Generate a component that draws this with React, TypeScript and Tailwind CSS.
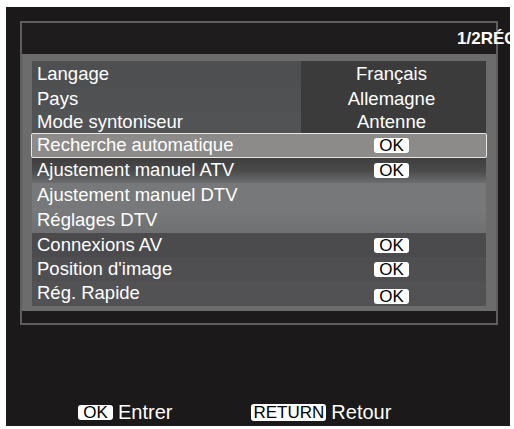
import React from 'react';

const font = { fontFamily: '"Liberation Sans", Arial, sans-serif' };

const Ok: React.FC<{ className?: string }> = ({ className = '' }) => (
  <span
    className={`inline-flex h-[15px] w-[35px] items-center justify-center rounded-[3px] bg-white text-[17px] leading-none text-black ${className}`}
  >
    OK
  </span>
);

type Row = {
  label: string;
  value?: string;
  ok?: boolean;
  h: string;
  bg: string;
  valueBg?: string;
  selected?: boolean;
  okClass?: string;
};

const rows: Row[] = [
  { label: 'Langage', value: 'Français', h: 'h-[26px]', bg: 'bg-[#4e4f51]', valueBg: 'bg-[#3b3b3c]' },
  { label: 'Pays', value: 'Allemagne', h: 'h-[24px]', bg: 'bg-[#505153]', valueBg: 'bg-[#3b3b3c]' },
  { label: 'Mode syntoniseur', value: 'Antenne', h: 'h-[22px]', bg: 'bg-[#525355]', valueBg: 'bg-[#3b3b3c]' },
  { label: 'Recherche automatique', ok: true, h: 'h-[25px]', bg: 'bg-[#8d8b89]', selected: true },
  { label: 'Ajustement manuel ATV', ok: true, h: 'h-[25px]', bg: 'bg-gradient-to-b from-[#3e3e3f] via-[#4a4a4b] to-[#6c6d6e]' },
  { label: 'Ajustement manuel DTV', h: 'h-[25px]', bg: 'bg-[#777879]' },
  { label: 'Réglages DTV', h: 'h-[25px]', bg: 'bg-gradient-to-b from-[#797a7b] to-[#6f7071]' },
  { label: 'Connexions AV', ok: true, h: 'h-[24px]', bg: 'bg-[#4b4b4d]' },
  { label: "Position d'image", ok: true, h: 'h-[24px]', bg: 'bg-[#4f4f51]' },
  { label: 'Rég. Rapide', ok: true, h: 'h-[25px]', bg: 'bg-[#525254]', okClass: 'mt-[6px]' },
];

export default function App() {
  return (
    <div className="h-[429px] w-[514px] bg-white pl-[6px] pt-[7px]" style={font}>
      <div className="flex h-[419px] w-[504px] flex-col overflow-hidden bg-[#1b1919] pl-[14px] pt-[14px]">
        <div className="w-[478px] border-2 border-[#5e5e5e] bg-[#6c6c6c]">
          <div className="flex h-[31px] items-center whitespace-nowrap bg-[#1e1c1c] pl-[435px] text-[17px] font-bold text-white">
            1/2RÉGLAGES
          </div>
          <div className="px-[10px] pb-[5px] pt-[7px]">
            {rows.map((r) => (
              <div
                key={r.label}
                className={`flex ${r.h} ${r.bg} ${r.selected ? '-mx-[1px] rounded-[2px] border-[1.5px] border-[#e8e6e4]' : ''}`}
              >
                <div className="flex flex-1 items-center pl-[5px] text-[18.5px] leading-none text-white">
                  {r.label}
                </div>
                <div
                  className={`flex w-[185px] items-center justify-center pr-[4px] text-[18.5px] leading-none text-white ${r.valueBg ?? ''}`}
                >
                  {r.value}
                  {r.ok && <Ok className={r.okClass ?? ''} />}
                </div>
              </div>
            ))}
          </div>
          <div className="h-[12px] bg-[#1c1a1a]" />
        </div>
        <div className="flex flex-1 items-end pb-[4px] text-[20px] leading-none text-white">
          <div className="ml-[58px] flex items-center">
            <Ok />
            <span className="ml-[5px]">Entrer</span>
          </div>
          <div className="ml-[79px] flex items-center">
            <span className="inline-flex h-[17px] items-center rounded-[3px] bg-white px-[2px] pt-[1px] text-[17px] leading-none text-black">
              RETURN
            </span>
            <span className="ml-[5px]">Retour</span>
          </div>
        </div>
      </div>
    </div>
  );
}
